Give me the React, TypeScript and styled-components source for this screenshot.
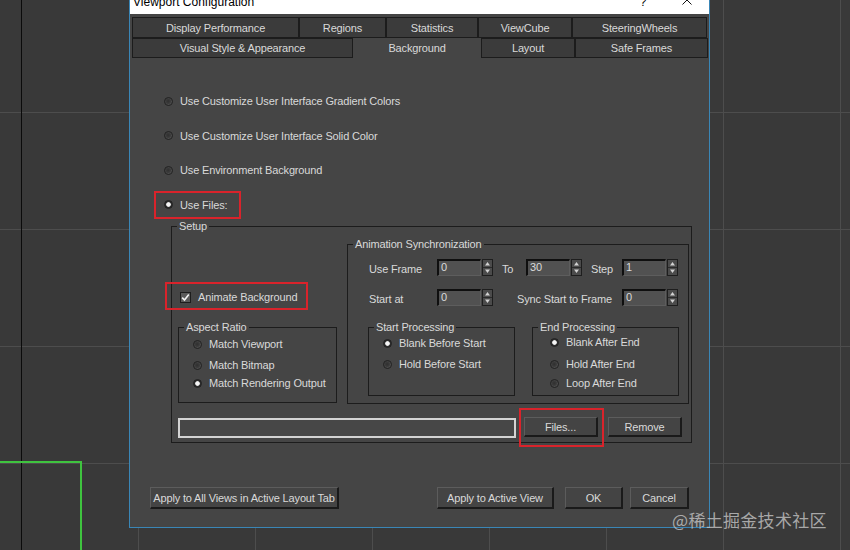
import React from "react";
import styled, { createGlobalStyle } from "styled-components";

const GlobalStyle = createGlobalStyle`
  html, body { margin: 0; padding: 0; }
  body {
    width: 850px; height: 550px; overflow: hidden; background: #393939;
    font-family: "Liberation Sans", Arial, sans-serif;
  }
  #root { width: 850px; height: 550px; }
`;

const UI_FONT = `"Liberation Sans", Arial, sans-serif`;
const TEXT = "#d9d9d9";
const PANEL = "#454545";
const EDGE = "#1c1c1c";

const Desktop = styled.div`
  position: relative;
  width: 850px;
  height: 550px;
  overflow: hidden;
  background-color: #393939;
  background-image:
    linear-gradient(to right, transparent 21px, #0b0b0b 21px, #0b0b0b 22px, transparent 22px),
    linear-gradient(to right, #4d4d4d 1px, transparent 1px),
    linear-gradient(to bottom, #4d4d4d 1px, transparent 1px);
  background-size: 100% 100%, 117px 100%, 100% 117px;
  background-position: 0 0, 21px 0, 0 112px;
  background-repeat: no-repeat, repeat, repeat;
`;

const ActiveViewport = styled.div`
  position: absolute;
  left: -10px;
  top: 461px;
  width: 92px;
  height: 120px;
  box-sizing: border-box;
  border: 2px solid #3fc43f;
`;

const Window = styled.div`
  position: absolute;
  left: 129px;
  top: -15px;
  width: 581px;
  height: 543px;
  box-sizing: border-box;
  border: 1px solid #3a86b6;
  background: ${PANEL};
  display: flex;
  flex-direction: column;
  font-family: ${UI_FONT};
  font-size: 11px;
  letter-spacing: -0.15px;
  color: ${TEXT};
`;

const TitleBar = styled.div`
  flex: none;
  height: 28px;
  box-sizing: border-box;
  padding-top: 4px;
  background: #ffffff;
  display: flex;
  align-items: center;
  color: #000;
  font-size: 12px;
  letter-spacing: 0;
`;

const Title = styled.div`
  flex: 1;
  padding-left: 3px;
  line-height: 14px;
  white-space: nowrap;
`;

const TitleButton = styled.div`
  width: 44px;
  height: 100%;
  display: flex;
  align-items: center;
  justify-content: center;
  line-height: 14px;
  svg { margin-top: -4px; }
`;

const Body = styled.div`
  flex: 1;
  display: flex;
  flex-direction: column;
`;

const TabStrip = styled.div`
  padding: 3px 0 0 2px;
  display: flex;
  flex-direction: column;
`;

const TabRow = styled.div`
  display: flex;
`;

const Tab = styled.div<{ $w: number; $h: number; $active?: boolean }>`
  width: ${(p) => p.$w}px;
  height: ${(p) => p.$h}px;
  box-sizing: border-box;
  display: flex;
  align-items: center;
  justify-content: center;
  white-space: nowrap;
  background: ${(p) => (p.$active ? PANEL : "#3b3b3b")};
  border: 1px solid ${(p) => (p.$active ? "transparent" : EDGE)};
`;

const Page = styled.div`
  flex: 1;
  display: flex;
  flex-direction: column;
  align-items: flex-start;
`;

const SourceList = styled.div`
  margin: 35px 0 0 34px;
  display: flex;
  flex-direction: column;
  align-items: flex-start;
  gap: 18.5px;
`;

const Option = styled.div`
  display: flex;
  align-items: center;
  gap: 7px;
  height: 16px;
  white-space: nowrap;
`;

const RadioDot = styled.span<{ $on?: boolean }>`
  flex: none;
  width: 9px;
  height: 9px;
  border-radius: 50%;
  box-sizing: border-box;
  border: 1px solid #202020;
  background: ${(p) =>
    p.$on
      ? "radial-gradient(circle, #f4f4f4 0 1.9px, #2e2e2e 2.7px)"
      : "radial-gradient(circle at 45% 45%, #2f2f2f 0, #3c3c3c 45%, #6a6a6a 100%)"};
`;

const Marked = styled.div<{ $t: number; $r: number; $b: number; $l: number }>`
  position: relative;
  display: flex;
  &::after {
    content: "";
    position: absolute;
    top: ${(p) => -p.$t}px;
    right: ${(p) => -p.$r}px;
    bottom: ${(p) => -p.$b}px;
    left: ${(p) => -p.$l}px;
    border: 2px solid #d9232b;
    pointer-events: none;
  }
`;

const Group = styled.div<{ $w: number; $h: number; $pad: string }>`
  position: relative;
  flex: none;
  box-sizing: border-box;
  width: ${(p) => p.$w}px;
  height: ${(p) => p.$h}px;
  padding: ${(p) => p.$pad};
  border: 1px solid ${EDGE};
  display: flex;
  flex-direction: column;
  align-items: flex-start;
`;

const GroupSlot = styled.div<{ $mt?: number; $ml?: number; $mb?: number }>`
  margin-top: ${(p) => p.$mt ?? 0}px;
  margin-left: ${(p) => p.$ml ?? 0}px;
  margin-bottom: ${(p) => p.$mb ?? 0}px;
`;

const Caption = styled.span`
  position: absolute;
  top: -8px;
  left: 5px;
  padding: 0 2px;
  line-height: 14px;
  background: ${PANEL};
  white-space: nowrap;
`;

const SetupTop = styled.div`
  display: flex;
  align-items: flex-end;
  gap: 10px;
`;

const LeftColumn = styled.div`
  width: 159px;
  display: flex;
  flex-direction: column;
  align-items: flex-start;
`;

const CheckMark = styled.span`
  flex: none;
  width: 11px;
  height: 11px;
  box-sizing: border-box;
  border: 1px solid #1d1d1d;
  background: #5a5a5a;
  display: grid;
  place-items: center;
`;

const Stack = styled.div<{ $rows: string }>`
  display: grid;
  grid-template-rows: ${(p) => p.$rows};
  align-items: start;
`;

const FieldRow = styled.div<{ $gapTop?: number }>`
  display: flex;
  align-items: flex-start;
  height: 17px;
  padding-left: 1px;
  margin-top: ${(p) => p.$gapTop ?? 0}px;
`;

const FieldLabel = styled.span<{ $w: number; $pad?: number }>`
  width: ${(p) => p.$w}px;
  box-sizing: border-box;
  padding: 4px 0 0 ${(p) => p.$pad ?? 0}px;
  white-space: nowrap;
  line-height: 13px;
`;

const SpinnerWrap = styled.div`
  display: flex;
  gap: 1px;
  height: 17px;
`;

const NumBox = styled.div`
  width: 44px;
  height: 17px;
  box-sizing: border-box;
  padding: 0 0 0 2px;
  background: #515151;
  border-top: 2px solid #0f0f0f;
  border-left: 2px solid #0f0f0f;
  border-right: 1px solid #5d5d5d;
  border-bottom: 1px solid #5d5d5d;
  line-height: 13px;
`;

const ProcessingRow = styled.div`
  margin-top: 21px;
  display: flex;
  gap: 17px;
`;

const SetupBottom = styled.div`
  margin-top: 13px;
  display: flex;
  align-items: flex-start;
`;

const PathField = styled.div`
  width: 338px;
  height: 20px;
  margin-top: 1px;
  box-sizing: border-box;
  border: 2px solid #d3d3d3;
  background: #474747;
`;

const Button = styled.button<{ $w: number; $h: number; $ml?: number }>`
  flex: none;
  width: ${(p) => p.$w}px;
  height: ${(p) => p.$h}px;
  margin-left: ${(p) => p.$ml ?? 0}px;
  box-sizing: border-box;
  padding: 0;
  background: #444444;
  color: ${TEXT};
  font-family: ${UI_FONT};
  font-size: 11px;
  letter-spacing: -0.15px;
  white-space: nowrap;
  border-style: solid;
  border-width: 1px 2px 2px 1px;
  border-color: #5c5c5c #1a1a1a #1a1a1a #5c5c5c;
`;

const Footer = styled.div`
  margin-top: auto;
  align-self: stretch;
  display: flex;
  justify-content: space-between;
  padding: 0 20px 18px;
`;

const FooterGroup = styled.div`
  display: flex;
`;

const Watermark = styled.div`
  position: absolute;
  left: 672px;
  top: 509px;
  font-family: "Noto Sans CJK SC", "Liberation Sans", sans-serif;
  font-size: 17px;
  line-height: 22px;
  letter-spacing: 0.3px;
  color: rgba(205, 205, 205, 0.75);
  white-space: nowrap;
`;

function Radio({ label, on }: { label: string; on?: boolean }) {
  return (
    <Option>
      <RadioDot $on={on} />
      <span>{label}</span>
    </Option>
  );
}

function Spinner({ value }: { value: string }) {
  return (
    <SpinnerWrap>
      <NumBox>{value}</NumBox>
      <svg width="11" height="17" viewBox="0 0 11 17">
        <rect x="0.5" y="0.5" width="10" height="16" fill="#4b4b4b" stroke="#1e1e1e" />
        <line x1="1" y1="8.5" x2="10" y2="8.5" stroke="#2a2a2a" />
        <polygon points="3,6.5 8,6.5 5.5,3" fill="#d2d2d2" />
        <polygon points="3,10.5 8,10.5 5.5,14" fill="#d2d2d2" />
      </svg>
    </SpinnerWrap>
  );
}

export default function App() {
  return (
    <Desktop>
      <GlobalStyle />
      <ActiveViewport />
      <Window>
        <TitleBar>
          <Title>Viewport Configuration</Title>
          <TitleButton>?</TitleButton>
          <TitleButton>
            <svg width="10" height="10" viewBox="0 0 10 10">
              <path d="M0.5 0.5 L9.5 9.5 M9.5 0.5 L0.5 9.5" stroke="#111" strokeWidth="1" />
            </svg>
          </TitleButton>
        </TitleBar>
        <Body>
          <TabStrip>
            <TabRow>
              <Tab $w={167} $h={21}>Display Performance</Tab>
              <Tab $w={87} $h={21}>Regions</Tab>
              <Tab $w={92} $h={21}>Statistics</Tab>
              <Tab $w={94} $h={21}>ViewCube</Tab>
              <Tab $w={135} $h={21}>SteeringWheels</Tab>
            </TabRow>
            <TabRow>
              <Tab $w={221} $h={20}>Visual Style &amp; Appearance</Tab>
              <Tab $w={128} $h={20} $active>Background</Tab>
              <Tab $w={94} $h={20}>Layout</Tab>
              <Tab $w={133} $h={20}>Safe Frames</Tab>
            </TabRow>
          </TabStrip>
          <Page>
            <SourceList>
              <Radio label="Use Customize User Interface Gradient Colors" />
              <Radio label="Use Customize User Interface Solid Color" />
              <Radio label="Use Environment Background" />
              <Marked $t={6} $r={14} $b={6} $l={10}>
                <Radio label="Use Files:" on />
              </Marked>
            </SourceList>

            <GroupSlot $mt={13.5} $ml={41}>
              <Group $w={521} $h={217} $pad="17px 2px 5px 6px">
                <Caption>Setup</Caption>
                <SetupTop>
                  <LeftColumn>
                    <GroupSlot $ml={2}>
                      <Marked $t={8} $r={11} $b={6} $l={15}>
                        <Option style={{ height: 14 }}>
                          <CheckMark>
                            <svg width="9" height="9" viewBox="0 0 9 9">
                              <path d="M1.2 4.6 L3.5 7 L7.8 1.6" fill="none" stroke="#f2f2f2" strokeWidth="1.6" />
                            </svg>
                          </CheckMark>
                          <span>Animate Background</span>
                        </Option>
                      </Marked>
                    </GroupSlot>
                    <GroupSlot $mt={23} $mb={1}>
                      <Group $w={159} $h={76} $pad="8px 0 0 14px">
                        <Caption>Aspect Ratio</Caption>
                        <Stack $rows="21px 18px 16px">
                          <Radio label="Match Viewport" />
                          <Radio label="Match Bitmap" />
                          <Radio label="Match Rendering Output" on />
                        </Stack>
                      </Group>
                    </GroupSlot>
                  </LeftColumn>

                  <Group $w={342} $h={160} $pad="14px 0 7px 20px">
                    <Caption>Animation Synchronization</Caption>
                    <FieldRow>
                      <FieldLabel $w={68}>Use Frame</FieldLabel>
                      <Spinner value="0" />
                      <FieldLabel $w={33} $pad={9}>To</FieldLabel>
                      <Spinner value="30" />
                      <FieldLabel $w={40} $pad={9}>Step</FieldLabel>
                      <Spinner value="1" />
                    </FieldRow>
                    <FieldRow $gapTop={13}>
                      <FieldLabel $w={68}>Start at</FieldLabel>
                      <Spinner value="0" />
                      <FieldLabel $w={129} $pad={24}>Sync Start to Frame</FieldLabel>
                      <Spinner value="0" />
                    </FieldRow>
                    <ProcessingRow>
                      <Group $w={147} $h={69} $pad="7px 0 0 14px">
                        <Caption>Start Processing</Caption>
                        <Stack $rows="21px 16px">
                          <Radio label="Blank Before Start" on />
                          <Radio label="Hold Before Start" />
                        </Stack>
                      </Group>
                      <Group $w={147} $h={69} $pad="6px 0 0 17px">
                        <Caption>End Processing</Caption>
                        <Stack $rows="22px 19px 16px">
                          <Radio label="Blank After End" on />
                          <Radio label="Hold After End" />
                          <Radio label="Loop After End" />
                        </Stack>
                      </Group>
                    </ProcessingRow>
                  </Group>
                </SetupTop>

                <SetupBottom>
                  <PathField />
                  <GroupSlot $ml={8}>
                    <Marked $t={9} $r={6} $b={10} $l={5}>
                      <Button $w={74} $h={20}>Files...</Button>
                    </Marked>
                  </GroupSlot>
                  <Button $w={74} $h={20} $ml={10}>Remove</Button>
                </SetupBottom>
              </Group>
            </GroupSlot>

            <Footer>
              <Button $w={189} $h={22}>Apply to All Views in Active Layout Tab</Button>
              <FooterGroup>
                <Button $w={117} $h={22}>Apply to Active View</Button>
                <Button $w={58} $h={22} $ml={11}>OK</Button>
                <Button $w={59} $h={22} $ml={7}>Cancel</Button>
              </FooterGroup>
            </Footer>
          </Page>
        </Body>
      </Window>
      <Watermark>@稀土掘金技术社区</Watermark>
    </Desktop>
  );
}
